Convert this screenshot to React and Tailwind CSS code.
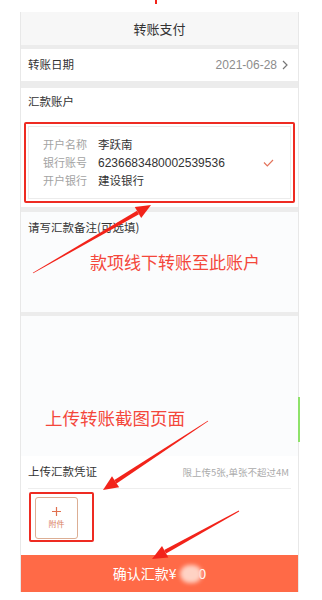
import React from 'react';

const font = { fontFamily: '"Noto Sans CJK SC", "Noto Sans", sans-serif' };

// computes a tapered arrow (shaft + head) between tail and tip
const arrowPoints = (tail, tip, headLen = 15, headHalf = 6.5) => {
  const dx = tip[0] - tail[0];
  const dy = tip[1] - tail[1];
  const len = Math.hypot(dx, dy);
  const ux = dx / len;
  const uy = dy / len;
  const nx = -uy;
  const ny = ux;
  const bx = tip[0] - ux * headLen;
  const by = tip[1] - uy * headLen;
  const shaft = [
    [tail[0] + nx * 0.4, tail[1] + ny * 0.4],
    [bx + nx * 2, by + ny * 2],
    [bx - nx * 2, by - ny * 2],
    [tail[0] - nx * 0.4, tail[1] - ny * 0.4],
  ];
  const head = [
    [bx + nx * headHalf, by + ny * headHalf],
    tip,
    [bx - nx * headHalf, by - ny * headHalf],
  ];
  const fmt = pts => pts.map(p => p.map(v => v.toFixed(1)).join(',')).join(' ');
  return { shaft: fmt(shaft), head: fmt(head) };
};

const Arrow = ({ tail, tip }) => {
  const { shaft, head } = arrowPoints(tail, tip);
  return (
    <g fill="#f2231a">
      <polygon points={shaft} />
      <polygon points={head} />
    </g>
  );
};

const InfoRow = ({ label, value, mono }) => (
  <div className="flex items-center h-[18px]">
    <span className="w-[55px] text-[11px] text-[#a3a3a3]">{label}</span>
    <span
      className={mono ? 'text-[12px] text-[#333]' : 'text-[11.5px] text-[#333]'}
      style={mono ? { fontFamily: '"Liberation Sans", sans-serif' } : undefined}
    >
      {value}
    </span>
  </div>
);

export default function App() {
  return (
    <div className="relative w-[322px] h-[600px] bg-white overflow-hidden" style={font}>
      <div className="h-[12px]" />
      <div className="ml-[20px] w-[279px] h-[580px] flex flex-col border-x border-[#e8e8e8]">
        {/* header */}
        <div className="h-[33px] shrink-0 bg-[#f7f7f7] flex items-center justify-center text-[13px] text-[#333]">
          转账支付
        </div>
        <div className="h-[4px] shrink-0 bg-[#ececec]" />

        {/* date */}
        <div className="h-[32px] shrink-0 flex items-center justify-between pl-[7px] pr-[10px] bg-white">
          <span className="text-[11.5px] text-[#333]">转账日期</span>
          <span className="flex items-center gap-[5px] text-[12px] text-[#8c8c8c]" style={{ fontFamily: '"Liberation Sans", sans-serif' }}>
            2021-06-28
            <svg width="6" height="10" viewBox="0 0 6 10" fill="none" stroke="#777" strokeWidth="1.2">
              <path d="M1 1l4 4-4 4" />
            </svg>
          </span>
        </div>
        <div className="h-[7px] shrink-0 bg-[#ececec]" />

        {/* account */}
        <div className="shrink-0 bg-white">
          <div className="h-[28px] flex items-center pl-[7px] text-[11.5px] text-[#333]">汇款账户</div>
          <div className="mt-[6px] mx-[3px] h-[81px] border-2 border-[#ee2b22] rounded-[2px] p-[2px]">
            <div className="h-full border border-[#ececec] flex items-center justify-between pl-[14px] pr-[16px]">
              <div className="flex flex-col">
                <InfoRow label="开户名称" value="李跃南" />
                <InfoRow label="银行账号" value="6236683480002539536" mono />
                <InfoRow label="开户银行" value="建设银行" />
              </div>
              <svg width="11" height="8" viewBox="0 0 11 8" fill="none" stroke="#e3735b" strokeWidth="1.2">
                <path d="M1 3.5l3.3 3.3L10 1" />
              </svg>
            </div>
          </div>
          <div className="h-[4px]" />
        </div>
        <div className="h-[5px] shrink-0 bg-[#ececec]" />

        {/* remark */}
        <div className="h-[100px] shrink-0 bg-[#fbfcfd]">
          <div className="h-[32px] flex items-center pl-[7px] text-[11.5px] text-[#333]">请写汇款备注(可选填)</div>
        </div>
        <div className="h-[4px] shrink-0 bg-[#ececec]" />

        {/* upload */}
        <div className="h-[140px] shrink-0 bg-[#fbfcfd]" />
        <div className="bg-white px-[7px]">
          <div className="h-[33px] flex items-center justify-between border-b border-[#eeeeee] pr-[2px]">
            <span className="text-[11.5px] text-[#333]">上传汇款凭证</span>
            <span className="text-[9.5px] text-[#ababab]">限上传5张,单张不超过4M</span>
          </div>
          <div className="pt-[3px] pb-[13px]">
            <div className="w-[65px] h-[50px] ml-[1px] border-2 border-[#ee2b22] rounded-[2px] pl-[4px] pt-[3px]">
              <div className="w-[43px] h-[42px] border border-[#dcae94] rounded-[3px] flex flex-col items-center justify-center gap-[3px] bg-white">
                <svg width="9" height="9" viewBox="0 0 9 9" fill="none" stroke="#e0704f" strokeWidth="1.2">
                  <path d="M4.5 0v9M0 4.5h9" />
                </svg>
                <span className="text-[8px] leading-[10px] text-[#d9805f]">附件</span>
              </div>
            </div>
          </div>
        </div>

        {/* submit */}
        <div className="h-[37px] shrink-0 bg-[#ff6a47] flex items-center justify-center text-[14px] text-white">
          <span>确认汇款¥</span>
          <span className="w-[22px] h-[18px] mx-[3px] rounded-full bg-[#ffd2c4] blur-[2px]" />
          <span className="-ml-[6px]">0</span>
        </div>
        <div className="flex-1 bg-white" />
      </div>

      {/* right edge scroll indicator */}
      <div className="absolute left-[298px] top-[397px] w-[2px] h-[45px] bg-[#8ee26a]" />

      {/* annotations */}
      <span className="absolute left-[90px] top-[250px] text-[17px] leading-[24px] text-[#f4473b]">款项线下转账至此账户</span>
      <span className="absolute left-[45px] top-[406px] text-[17.5px] leading-[24px] text-[#f4473b]">上传转账截图页面</span>
      <svg className="absolute left-0 top-0 pointer-events-none" width="322" height="600" viewBox="0 0 322 600">
        <rect x="155" y="0" width="2" height="4" fill="#f2231a" />
        <Arrow tail={[33, 273]} tip={[151, 205]} />
        <Arrow tail={[208, 421]} tip={[103, 490]} />
        <Arrow tail={[239, 511]} tip={[152, 559]} />
      </svg>
    </div>
  );
}
